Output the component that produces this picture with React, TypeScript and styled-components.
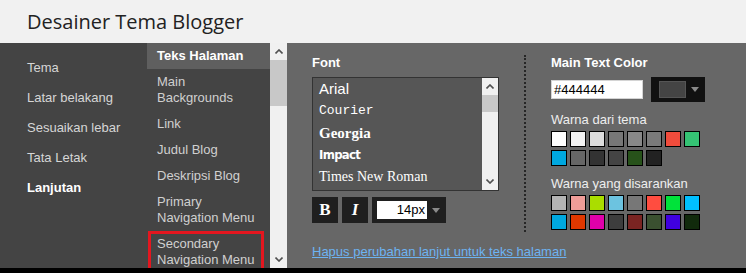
import styled, { createGlobalStyle } from "styled-components"

const GlobalStyle = createGlobalStyle`
  html, body {
    margin: 0;
    padding: 0;
    background: #000;
  }
  body {
    font-family: "Liberation Sans", Arial, sans-serif;
    font-size: 13px;
  }
`

const Page = styled.div`
  width: 746px;
  height: 273px;
  display: flex;
  flex-direction: column;
  overflow: hidden;
  background: #000;
`

const Header = styled.div`
  height: 43px;
  flex: none;
  background: #f1f1f1;
  display: flex;
  align-items: center;
  padding-left: 27px;
  font-family: "Open Sans", sans-serif;
  font-size: 20px;
  color: #222;
`

const Main = styled.div`
  height: 225px;
  flex: none;
  display: flex;
`

const LeftNav = styled.ul`
  width: 147px;
  flex: none;
  margin: 0;
  padding: 10px 0 0;
  list-style: none;
  background: #444;
`

const NavItem = styled.li<{ $active?: boolean }>`
  padding: 7px 0 7px 27px;
  line-height: 16px;
  color: ${(p) => (p.$active ? "#fff" : "#d6d6d6")};
  font-weight: ${(p) => (p.$active ? "bold" : "normal")};
`

const SubNav = styled.ul`
  width: 123px;
  flex: none;
  margin: 0;
  padding: 0;
  list-style: none;
  background: #444;
  overflow: hidden;
`

const SubHeading = styled.li`
  height: 26px;
  line-height: 26px;
  padding-left: 10px;
  background: #5f5f5f;
  color: #fff;
  font-weight: bold;
`

const SubItem = styled.li<{ $marked?: boolean }>`
  position: relative;
  padding: 5px 8px 5px 10px;
  line-height: 16px;
  color: #d0d0d0;

  ${(p) =>
    p.$marked &&
    `
    &::after {
      content: "";
      position: absolute;
      left: 1px;
      top: 0;
      width: 116px;
      height: 40px;
      box-sizing: border-box;
      border: 3px solid #e4161f;
    }
  `}
`

const ScrollTrack = styled.div<{ $w: number }>`
  width: ${(p) => p.$w}px;
  flex: none;
  background: #f0f0f0;
  display: flex;
  flex-direction: column;
  align-items: center;
`

const ScrollArrow = styled.div`
  height: 17px;
  flex: none;
  display: flex;
  align-items: center;
  justify-content: center;
`

const ScrollThumb = styled.div<{ $h: number }>`
  align-self: stretch;
  height: ${(p) => p.$h}px;
  flex: none;
  background: #c8c8c8;
`

const ScrollRest = styled.div`
  flex: 1;
`

const Panel = styled.div`
  flex: 1;
  background: #676767;
  display: flex;
  padding: 12px 0 0 25px;
`

const FontSection = styled.div`
  width: 187px;
  flex: none;
`

const Label = styled.div`
  color: #fff;
  font-weight: bold;
  line-height: 16px;
`

const FontList = styled.div`
  margin-top: 6px;
  height: 114px;
  box-sizing: border-box;
  border: 1px solid #333;
  background: #565656;
  display: flex;
`

const FontOptions = styled.ul`
  flex: 1;
  margin: 0;
  padding: 0 0 0 6px;
  list-style: none;
  overflow: hidden;
`

const FontOption = styled.li<{ $family: string; $size: number; $weight?: string; $ls?: number }>`
  height: 22px;
  line-height: 22px;
  color: #fff;
  font-family: ${(p) => p.$family};
  font-size: ${(p) => p.$size}px;
  font-weight: ${(p) => p.$weight || "normal"};
  letter-spacing: ${(p) => p.$ls || 0}px;
  white-space: nowrap;
`

const StyleRow = styled.div`
  margin-top: 6px;
  display: flex;
  gap: 4px;
`

const StyleButton = styled.div<{ $italic?: boolean }>`
  width: 26px;
  height: 26px;
  background: #1f1f1f;
  color: #fff;
  font-family: "Liberation Serif", serif;
  font-weight: bold;
  font-style: ${(p) => (p.$italic ? "italic" : "normal")};
  font-size: 17px;
  display: flex;
  align-items: center;
  justify-content: center;
`

const SizeSelect = styled.div`
  width: 74px;
  height: 26px;
  background: #1f1f1f;
  display: flex;
  align-items: center;
  padding-left: 5px;
  box-sizing: border-box;
`

const SizeInput = styled.div`
  width: 50px;
  height: 18px;
  background: #fff;
  color: #000;
  text-align: right;
  line-height: 18px;
  padding-right: 2px;
  box-sizing: border-box;
`

const Caret = styled.div<{ $ml: number }>`
  margin-left: ${(p) => p.$ml}px;
  width: 0;
  height: 0;
  border-left: 4.5px solid transparent;
  border-right: 4.5px solid transparent;
  border-top: 5px solid #8a8a8a;
`

const ResetLink = styled.a`
  display: block;
  margin-top: 21px;
  line-height: 16px;
  color: #6db3f2;
  text-decoration: underline;
  white-space: nowrap;
  cursor: pointer;
`

const Divider = styled.div`
  width: 0;
  height: 177px;
  margin-left: 25px;
  border-left: 2px dotted #262626;
`

const ColorSection = styled.div`
  margin-left: 25px;
`

const PickerRow = styled.div`
  margin-top: 6px;
  display: flex;
  align-items: center;
  gap: 8px;
`

const HexInput = styled.div`
  width: 92px;
  height: 19px;
  box-sizing: border-box;
  background: #fff;
  border: 1px solid #d4d4d4;
  color: #000;
  line-height: 17px;
  padding-left: 2px;
`

const PickerButton = styled.div`
  width: 54px;
  height: 25px;
  background: #111;
  display: flex;
  align-items: center;
  padding-left: 8px;
  box-sizing: border-box;
`

const PickerSwatch = styled.div`
  width: 27px;
  height: 17px;
  box-sizing: border-box;
  background: #444;
  border: 1px solid #555;
`

const SubLabel = styled.div`
  margin-top: 10px;
  color: #eee;
  line-height: 16px;
`

const SwatchGrid = styled.div`
  margin-top: 3px;
  display: grid;
  grid-template-columns: repeat(8, 16px);
  gap: 3px;
`

const Swatch = styled.div<{ $c: string }>`
  width: 16px;
  height: 16px;
  box-sizing: border-box;
  border: 1px solid #000;
  background: ${(p) => p.$c};
`

const BottomBar = styled.div`
  height: 5px;
  background: #000;
`

const Chevron = ({ up }: { up?: boolean }) => (
  <svg width="8" height="5" viewBox="0 0 8 5">
    <path
      d={up ? "M0.5 4.5 L4 1 L7.5 4.5" : "M0.5 0.5 L4 4 L7.5 0.5"}
      fill="none"
      stroke="#505050"
      strokeWidth="1.6"
    />
  </svg>
)

const themeColors = ["#fff", "#f3f3f3", "#ddd", "#777", "#888", "#7a7a7a", "#f04c3c", "#35c374",
  "#00a8e0", "#666", "#333", "#444", "#27521a", "#222"]

const suggestedColors = ["#b3b3b3", "#f09d98", "#aadd00", "#6cc3e0", "#777", "#ff4d40", "#00e33a", "#00bfff",
  "#00a8e0", "#e03800", "#e000aa", "#3d3d3d", "#7a2422", "#3a5030", "#4000e0", "#112a0c"]

const fonts = [
  { name: "Arial", family: '"Liberation Sans", sans-serif', size: 15 },
  { name: "Courier", family: '"Liberation Mono", monospace', size: 13 },
  { name: "Georgia", family: '"Liberation Serif", serif', size: 15, weight: "bold" },
  { name: "Impact", family: '"DejaVu Sans Condensed", sans-serif', size: 13, weight: "bold", ls: -0.7 },
  { name: "Times New Roman", family: '"Liberation Serif", serif', size: 14 },
]

function App() {
  return (
    <Page>
      <GlobalStyle />
      <Header>Desainer Tema Blogger</Header>
      <Main>
        <LeftNav>
          <NavItem>Tema</NavItem>
          <NavItem>Latar belakang</NavItem>
          <NavItem>Sesuaikan lebar</NavItem>
          <NavItem>Tata Letak</NavItem>
          <NavItem $active>Lanjutan</NavItem>
        </LeftNav>
        <SubNav>
          <SubHeading>Teks Halaman</SubHeading>
          <SubItem>Main Backgrounds</SubItem>
          <SubItem>Link</SubItem>
          <SubItem>Judul Blog</SubItem>
          <SubItem>Deskripsi Blog</SubItem>
          <SubItem>Primary Navigation Menu</SubItem>
          <SubItem $marked>Secondary Navigation Menu</SubItem>
        </SubNav>
        <ScrollTrack $w={17}>
          <ScrollArrow><Chevron up /></ScrollArrow>
          <ScrollThumb $h={46} />
          <ScrollRest />
          <ScrollArrow><Chevron /></ScrollArrow>
        </ScrollTrack>
        <Panel>
          <FontSection>
            <Label>Font</Label>
            <FontList>
              <FontOptions>
                {fonts.map((f) => (
                  <FontOption key={f.name} $family={f.family} $size={f.size} $weight={f.weight} $ls={f.ls}>
                    {f.name}
                  </FontOption>
                ))}
              </FontOptions>
              <ScrollTrack $w={16}>
                <ScrollArrow><Chevron up /></ScrollArrow>
                <ScrollThumb $h={17} />
                <ScrollRest />
                <ScrollArrow><Chevron /></ScrollArrow>
              </ScrollTrack>
            </FontList>
            <StyleRow>
              <StyleButton>B</StyleButton>
              <StyleButton $italic>I</StyleButton>
              <SizeSelect>
                <SizeInput>14px</SizeInput>
                <Caret $ml={5} />
              </SizeSelect>
            </StyleRow>
            <ResetLink>Hapus perubahan lanjut untuk teks halaman</ResetLink>
          </FontSection>
          <Divider />
          <ColorSection>
            <Label>Main Text Color</Label>
            <PickerRow>
              <HexInput>#444444</HexInput>
              <PickerButton>
                <PickerSwatch />
                <Caret $ml={5} />
              </PickerButton>
            </PickerRow>
            <SubLabel>Warna dari tema</SubLabel>
            <SwatchGrid>
              {themeColors.map((c, i) => <Swatch key={i} $c={c} />)}
            </SwatchGrid>
            <SubLabel>Warna yang disarankan</SubLabel>
            <SwatchGrid>
              {suggestedColors.map((c, i) => <Swatch key={i} $c={c} />)}
            </SwatchGrid>
          </ColorSection>
        </Panel>
      </Main>
      <BottomBar />
    </Page>
  )
}

export default App
